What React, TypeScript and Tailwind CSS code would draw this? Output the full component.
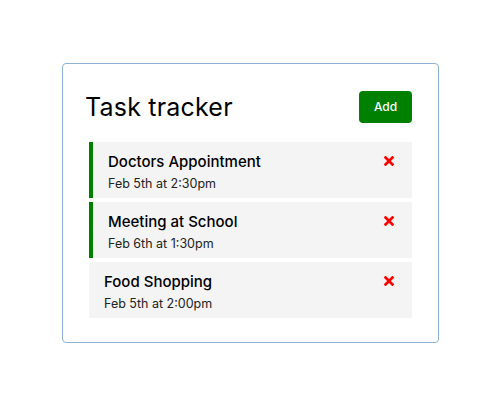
import React from 'react';

type Task = { id: number; text: string; day: string; reminder: boolean };

const tasks: Task[] = [
  { id: 1, text: 'Doctors Appointment', day: 'Feb 5th at 2:30pm', reminder: true },
  { id: 2, text: 'Meeting at School', day: 'Feb 6th at 1:30pm', reminder: true },
  { id: 3, text: 'Food Shopping', day: 'Feb 5th at 2:00pm', reminder: false },
];

const Times = () => (
  <svg width="10" height="10" viewBox="80 80 352 352" className="shrink-0">
    <g transform="translate(80 0)">
      <path
        fill="#ff0000"
        d="M242.72 256l100.07-100.07c12.28-12.28 12.28-32.19 0-44.48l-22.24-22.24c-12.28-12.28-32.19-12.28-44.48 0L176 189.28 75.93 89.21c-12.28-12.28-32.19-12.28-44.48 0L9.21 111.45c-12.28 12.28-12.28 32.19 0 44.48L109.28 256 9.21 356.07c-12.28 12.28-12.28 32.19 0 44.48l22.24 22.240c12.28 12.28 32.2 12.28 44.48 0L176 322.72l100.07 100.07c12.28 12.28 32.2 12.28 44.48 0l22.24-22.24c12.28-12.28 12.28-32.190 0-44.48L242.72 256z"
      />
    </g>
  </svg>
);

export default function App() {
  return (
    <div className="min-h-[400px] bg-white pt-[63px] font-['Inter',sans-serif] text-black">
      <div className="ml-[62px] h-[280px] w-[377px] rounded-[4px] border-[1.5px] border-[#8fb1d3] px-[22px] pt-[23px]">
        <header className="mb-[15px] flex items-center justify-between">
          <h1 className="text-[25px] font-normal leading-none tracking-[0.2px]">Task tracker</h1>
          <button className="m-1 h-8 w-[53px] rounded-[4px] bg-[#008000] text-[12px] font-medium text-white">
            Add
          </button>
        </header>
        <div className="flex flex-col gap-1 px-1">
          {tasks.map((t) => (
            <div
              key={t.id}
              className={
                t.reminder
                  ? 'flex h-[56px] items-start justify-between border-l-4 border-[#008000] bg-[#f4f4f4] pt-[11px] pl-[15px] pr-[18px]'
                  : 'flex h-[56px] items-start justify-between bg-[#f4f4f4] pt-[11px] pl-[15px] pr-[18px]'
              }
            >
              <div className="flex flex-col">
                <h3 className="text-[15px] font-medium leading-[18px]">{t.text}</h3>
                <p className="mt-[5px] text-[12.5px] leading-[16px] text-[#222]">{t.day}</p>
              </div>
              <div className="mt-[3px]">
                <Times />
              </div>
            </div>
          ))}
        </div>
      </div>
    </div>
  );
}
